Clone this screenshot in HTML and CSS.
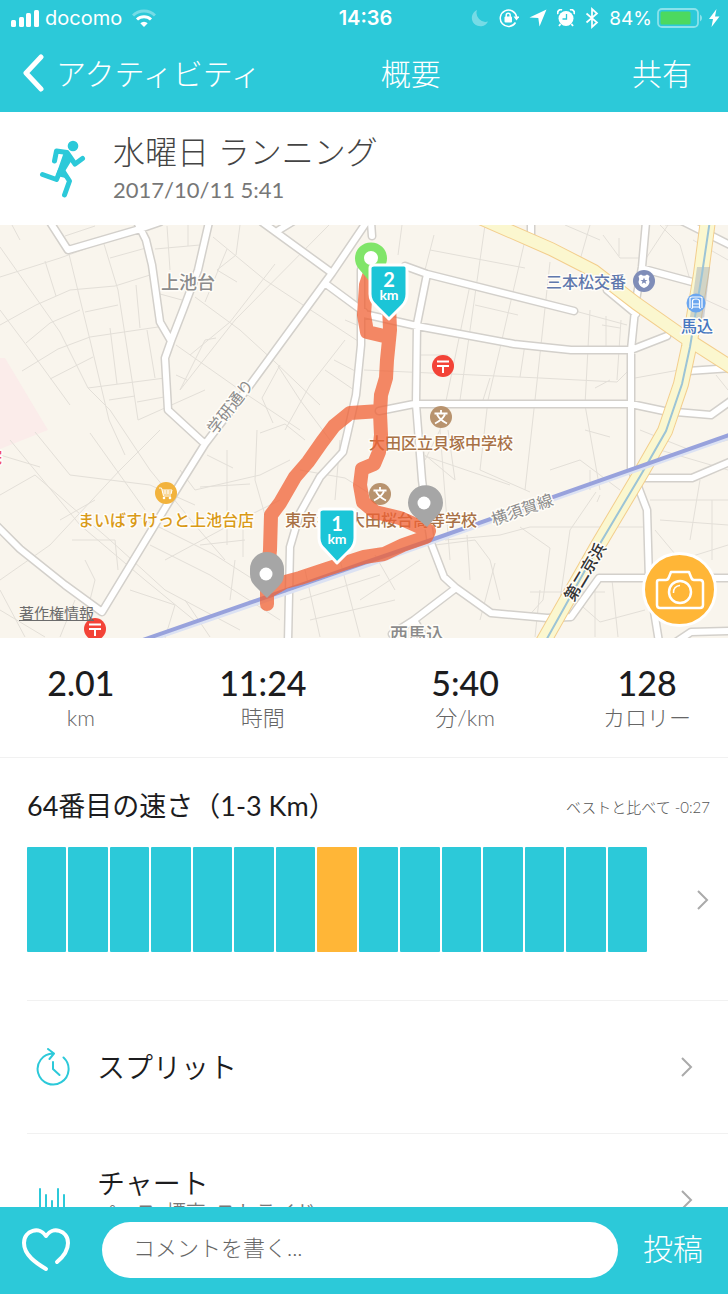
FILE: index.html
```html
<!DOCTYPE html>
<html lang="ja">
<head>
    <meta charset="UTF-8">
    <meta name="viewport" content="width=device-width, initial-scale=1">
    <title>概要</title>
    <link rel="stylesheet" href="styles.css">
</head>
<body>
    <header class="top">
        <div class="status-bar">
            <div class="status-left">
                <svg width="29" height="18" viewBox="0 0 29 18" fill="#fff">
                    <rect x="0" y="11" width="5" height="7" rx="1.5"/>
                    <rect x="8" y="8" width="5" height="10" rx="1.5"/>
                    <rect x="15" y="4" width="5" height="14" rx="1.5"/>
                    <rect x="23" y="1" width="5" height="17" rx="1.5"/>
                </svg>
                <span class="carrier">docomo</span>
                <svg width="24" height="18" viewBox="0 0 24 18" fill="none" stroke="#fff" stroke-width="3">
                    <path d="M1 6.500A15.500 15.500 0 0 1 23 6.500" opacity=".35"/>
                    <path d="M5 10.500A10 10 0 0 1 19 10.500"/>
                    <path d="M12 18L8.300 14.200A5.200 5.200 0 0 1 15.700 14.200Z" fill="#fff" stroke="none"/>
                </svg>
            </div>
            <div class="clock">14:36</div>
            <div class="status-right">
                <svg width="18" height="18" viewBox="0 0 18 18" fill="#fff" opacity=".35">
                    <path d="M6 1A8.500 8.500 0 1 0 17 12.500A9 9 0 0 1 6 1Z"/>
                </svg>
                <svg width="20" height="20" viewBox="0 0 20 20" fill="none" stroke="#fff" stroke-width="1.500">
                    <path d="M16.500 14.500A8.200 8.200 0 1 1 17.600 9"/>
                    <path d="M14.500 8.500H20.500L17.500 12.500Z" fill="#fff" stroke="none"/>
                    <rect x="5.500" y="8.500" width="7.500" height="6" rx="1" fill="#fff" stroke="none"/>
                    <path d="M7.200 9V7.200a2 2 0 0 1 4 0V9"/>
                </svg>
                <svg width="18" height="18" viewBox="0 0 18 18" fill="#fff">
                    <path d="M17.500 .5L10.500 17.500L9.300 9L.5 8.500Z"/>
                </svg>
                <svg width="18" height="18" viewBox="0 0 18 18">
                    <circle cx="9" cy="9.500" r="7.500" fill="#fff"/>
                    <path d="M1 5A3 3 0 0 1 5 1M13 1A3 3 0 0 1 17 5M3.500 15l-1.500 2M14.500 15l1.500 2" fill="none" stroke="#fff" stroke-width="1.800"/>
                    <path d="M9.500 5V10H5.500" fill="none" stroke="#2cc9d9" stroke-width="1.300"/>
                </svg>
                <svg width="14" height="22" viewBox="0 0 14 22" fill="none" stroke="#fff" stroke-width="1.700">
                    <path d="M1.500 6.500L12 15.500L7 20V2L12 6.500L1.500 15.500"/>
                </svg>
                <span class="battery-level">84%</span>
                <svg width="46" height="20" viewBox="0 0 46 20">
                    <rect x="1" y="1" width="40" height="18" rx="4" fill="none" stroke="#8be2eb" stroke-width="1.800"/>
                    <rect x="3.500" y="3.500" width="30" height="13" rx="1.500" fill="#4cd95f"/>
                    <path d="M43 6.500A4 4 0 0 1 43 13.500Z" fill="#8be2eb"/>
                </svg>
                <svg width="12" height="20" viewBox="0 0 12 20" fill="#fff">
                    <path d="M8.500 1L1 11H5L3.500 19L11.500 8.500H7Z"/>
                </svg>
            </div>
        </div>
        <nav class="nav-bar">
            <a class="back" href="#">
                <svg width="22" height="38" viewBox="0 0 22 38" fill="none" stroke="#fff" stroke-width="5" stroke-linecap="round" stroke-linejoin="round">
                    <path d="M19 3L4 19L19 35"/>
                </svg>
                アクティビティ
            </a>
            <h1>概要</h1>
            <button type="button" class="text-btn">共有</button>
        </nav>
    </header>

    <main>
        <section class="activity">
            <svg class="runner" width="48" height="60" viewBox="0 0 48 60" fill="none" stroke="#2cc9d9" stroke-width="5" stroke-linecap="round" stroke-linejoin="round">
                <circle cx="34" cy="8" r="5.300" fill="#2cc9d9" stroke="none"/>
                <path d="M15.500 23L17.500 13L28 14.500L36 26L43.500 20.500"/>
                <path d="M26 14L33 20L25 33L27 39L18 37Z" fill="#2cc9d9" stroke-width="2"/>
                <path d="M21.500 32L17.500 41.500L3.500 36.500M24 33L30.500 43L25.500 57"/>
            </svg>
            <div>
                <h2>水曜日 ランニング</h2>
                <time datetime="2017-10-11T05:41">2017/10/11 5:41</time>
            </div>
        </section>

        <section class="map">
            <svg class="map-canvas" viewBox="0 225 728 413" preserveAspectRatio="xMidYMid slice">
                <rect x="0" y="225" width="728" height="413" fill="#f9f5ed"/>
                <path d="M0 358H5L48 430L0 449Z" fill="#fbecea"/>

                <!-- side streets -->
                <g fill="none" stroke="#e3dfd8" stroke-width="1">
                    <path d="M0 247L60 332L88 388L110 410L150 470L195 525L225 560M0 310L30 350L70 405M12 225L20 240M0 277L60 258L110 240M0 325L36 305L70 290L115 286L150 275M26 343L50 323L80 310M22 371L58 349L90 337L158 327M50 379L93 357M88 388L165 378M68 250L90 340L109 420L125 455M104 244L118 290L132 380L138 420L205 390M45 261L56 296M110 328L117 384M147 330L155 378M136 285L140 328M85 312L118 305M109 400L135 396M137 402L164 397M65 236L95 226M110 258L146 248M167 226L170 270M155 249L200 245M188 225V246M160 294L182 300M176 345L240 390L300 430M195 297L240 330L275 362L320 405M213 237L265 280L364 345M240 225L236 255L217 270L237 282M227 249L205 302M275 264L230 322L190 355M329 225L235 320L180 390L205 340L216 338M176 375L187 380"/>
                    <path d="M280 365L262 398L273 423M278 366L300 400L330 440M345 340L310 385L285 430M334 360L357 372M345 320L364 328M325 370L354 390M260 433L285 424L305 440"/>
                    <path d="M402 225L398 255M434 235L425 270L530 300M485 225L460 400M525 240L488 400L480 470M590 225L580 260M430 250L525 268M470 285L440 430L425 460M550 262L535 400L525 490M590 310L585 405L600 490M606 316V350M621 320L617 380M420 355H448M364 370L540 378L617 382L629 370M475 305L518 315M525 344L520 377M635 378L690 368M490 378L483 400M603 235L620 258H640M619 238V256M660 225L680 245L690 280M640 430L690 450L728 440M565 225L600 240M668 225L645 260M693 240L728 260M706 300L728 310M716 375L728 390M575 311L627 325M602 325L620 328M610 380L595 388M665 225L700 225"/>
                    <path d="M0 495L35 475L110 540L165 590L240 630M0 580L50 545L120 470L160 430M10 440L80 525L145 580L200 625M35 432L70 475L150 485L195 505M90 433L120 475L145 510M0 455L40 467M60 520L95 500M72 540H115L118 570M85 560L95 580L90 600M135 515L215 555L270 590M150 545L210 575L280 620M180 470L195 490L260 475L290 460M200 487L250 484M165 560L230 525L280 500M130 590L175 605L165 638M60 637L75 600M25 637L0 590M227 450V545M243 525V557M200 545L245 540M207 455L233 468M257 430L255 480L265 515M0 610L45 637M185 600L210 637M235 560L230 600"/>
                    <path d="M300 470L345 478L380 500M340 440L335 500M440 430L450 560M448 430L455 480L425 455M480 470L530 492M425 456L510 485M550 470L580 460L620 490M596 492L570 530L560 600M445 540L500 535L530 527H645M520 527L550 548L543 600L525 620M435 545L475 540L490 560L500 600M495 563L480 620M530 592L605 592M467 535L470 580M540 590L535 637M585 430L610 437M590 470V490M650 500H728M655 530L680 560L728 545M700 480L690 540M712 500V560M595 590V637M612 580L618 637M575 600L600 622L645 610M660 450L728 470M600 495L597 502M305 570L320 637M340 560L360 637M300 600L380 575M360 600L420 560M375 555L395 590M660 520L728 525M310 620L395 600"/>
                </g>

                <!-- main streets: grey casing, then white fill -->
                <g class="casing">
                    <path id="streets" d="M50 222L68 250L140 229L160 222M137 222L146 240L152 265L160 322L171 341M209 222L198 270L183 310L171 341L165 358L168 410L205 444M372 214L332 273L250 385L205 444L170 500L102 612L65 585L20 549L-4 525M262 222L332 273M326 284L364 312M292 222L279 230M371 222L372 236M361 270V345L356 395L347 435L343 452L320 477L300 513L290 547L288 642M405 266L427 274L574 311M427 274L417 324L416 404L422 480L426 510L431 543L444 577L456 588L491 613L547 618L571 617L599 578H732M456 588L414 620L392 634M414 620L427 642M364 314L417 326L514 344L571 350H631L667 336M379 411L414 404H631L664 411L711 415L732 400M646 222L642 267L636 300L631 350V468L647 510L649 580L659 642M607 290L636 314M644 269L696 283M682 221L704 232M712 236L732 246M688 371L732 368M531 222V236M645 478H692L732 461M676 642L691 632L732 631"/>
                </g>
                <use href="#streets" class="street"/>

                <!-- highways -->
                <g fill="none">
                    <path d="M480 218L551 249L594 271L637 304L684 337L734 369" stroke="#f3ce8d" stroke-width="14"/>
                    <path d="M708 220L701 274L689 347L681 384L665 431L641 473L597 547L542 644" stroke="#f3ce8d" stroke-width="16"/>
                    <path d="M480 218L551 249L594 271L637 304L684 337L734 369" stroke="#fbf7cf" stroke-width="12"/>
                    <path d="M708 220L701 274L689 347L681 384L665 431L641 473L597 547L542 644" stroke="#fbf7cf" stroke-width="14"/>
                    <path d="M697 267H710L704 319L690 317Z" fill="#9da9bb" opacity=".45"/>
                    <path d="M710 220L702 274L690 347L682 384L666 431L642 473L598 547L544 644" stroke="#9cc4d6" stroke-width="2"/>
                    <path d="M140 644L364 567L431 543L732 437" stroke="#dce2f3" stroke-width="3"/>
                    <path d="M140 641L364 563L431 540L732 434" stroke="#98a2dc" stroke-width="4"/>
                </g>

                <!-- place names -->
                <g class="place">
                    <text x="188" y="289" class="area">上池台</text>
                    <text x="417" y="641" class="area">西馬込</text>
                    <text x="586" y="288" class="police">三本松交番</text>
                    <text x="697" y="332" class="station">馬込</text>
                    <text x="441" y="449" class="school">大田区立貝塚中学校</text>
                    <text x="381" y="526" class="school">東京都立大田桜台高等学校</text>
                    <text x="166" y="526" class="shop">まいばすけっと上池台店</text>
                    <text x="-6" y="463" class="hospital">院</text>
                    <text class="road-name" transform="translate(235 410) rotate(-52)">学研通り</text>
                    <text class="road-name" transform="translate(524 515) rotate(-19)">横須賀線</text>
                    <text class="highway-name" transform="translate(590 575) rotate(-59)">第二京浜</text>
                </g>

                <!-- place icons -->
                <g transform="translate(644 281)">
                    <circle r="11" fill="#7f8db8"/>
                    <path d="M-5.500-5L-3-6.500Q0-4 3-6.500L5.500-5Q4-2 5.500 1Q5 5.500 0 7Q-5 5.500-5.500 1Q-4-2-5.500-5Z" fill="#fff"/>
                    <path d="M0-3.500L1-1H3.500L1.500 .5L2.300 3L0 1.500L-2.300 3L-1.500 .5L-3.500-1H-1Z" fill="#7f8db8"/>
                </g>
                <g transform="translate(696 303)">
                    <circle r="9.500" fill="#6ba6ef"/>
                    <path d="M-6 5V-5Q-6-6-4-6H4Q6-6 6-5V5M-3.500 4V-2Q-3.500-4 0-4Q3.500-4 3.500-2V4ZM-3 1H3M-3 4L-4.500 6M3 4L4.500 6" fill="none" stroke="#fff" stroke-width="1.200"/>
                </g>
                <g id="post">
                    <circle cx="443" cy="366" r="11" fill="#f34337"/>
                    <path d="M437 361.500H449M437 366H449M443 366V373" fill="none" stroke="#fff" stroke-width="2"/>
                </g>
                <use href="#post" x="-348" y="263"/>
                <g id="school">
                    <circle cx="441" cy="417" r="11" fill="#b8936e"/>
                    <path d="M441 410V413M434.500 413.500H447.500M437 414.500Q440 420 447 423.500M445 414.500Q442 420 435 423.500" fill="none" stroke="#fff" stroke-width="1.800"/>
                </g>
                <use href="#school" x="-61" y="77"/>
                <g transform="translate(166 493)">
                    <circle r="11" fill="#f2b33d"/>
                    <path d="M-7-5H-4.500L-2.500 3H5M-4-3H6L5 1H-3M-1-3V1M2-3V1M-4-1H6" fill="none" stroke="#fff" stroke-width="1"/>
                    <circle cx="-2" cy="5" r="1.300" fill="#fff"/>
                    <circle cx="4" cy="5" r="1.300" fill="#fff"/>
                </g>

                <!-- run track -->
                <path class="track" d="M371 270L366 285L364 315L367 332L384 336M389 305L390 330L387 360L386 378L381 395L380 413L381 435L379 452L374 464L362 469L360 485L363 502L375 512L400 518L429 531L426 537L403 545L384 554L364 557L327 569L300 578L285 582L267 592V604V578L270 550L271 515L280 503L295 477L308 462L322 442L334 426L350 413L365 412L380 411"/>

                <!-- start, pauses and kilometre marks -->
                <path d="M371 283L359 269A16 16 0 1 1 383 269Z" fill="#80e569"/>
                <circle cx="371" cy="258" r="7" fill="#fff"/>
                <path d="M267 598Q260 591 255 586A17 17 0 0 1 250 574V569A16.500 16.500 0 0 1 284 569V574A17 17 0 0 1 279 586Q274 591 267 598Z" fill="#a6a6a6"/>
                <circle cx="266" cy="574" r="6.500" fill="#fff"/>
                <path d="M427 527L413 515A17.500 17.500 0 1 1 438 515Z" fill="#a6a6a6"/>
                <circle cx="424" cy="503" r="6.500" fill="#fff"/>
                <g class="km-mark">
                    <path d="M374 265H404Q407 265 407 268V294Q407 301 402 306L389 319L376 306Q370 301 370 294V268Q370 265 374 265Z"/>
                    <text x="389" y="287" class="km-number">2</text>
                    <text x="389" y="300">km</text>
                </g>
                <g class="km-mark">
                    <path d="M323 509H352Q355 509 355 512V538Q355 545 350 550L337 563L325 550Q319 545 319 538V512Q319 509 323 509Z"/>
                    <text x="337" y="531" class="km-number">1</text>
                    <text x="337" y="544">km</text>
                </g>
            </svg>
            <a class="legal" href="#">著作権情報</a>
            <button type="button" class="camera" aria-label="写真">
                <svg width="50" height="42" viewBox="0 0 50 42" fill="none" stroke="#fff" stroke-width="2.500" stroke-linejoin="round">
                    <path d="M4 11H11Q13 11 14 8L16 3H34L36 8Q37 11 39 11H45Q48 11 48 14V36Q48 39 45 39H5Q2 39 2 36V13Q2 11 4 11Z"/>
                    <circle cx="25" cy="23" r="11"/>
                    <path d="M18.500 24A6.500 6.500 0 0 1 25 16.500" stroke-width="1.500"/>
                </svg>
            </button>
        </section>

        <section class="stats">
            <div class="stat"><strong>2.01</strong><span>km</span></div>
            <div class="stat"><strong>11:24</strong><span>時間</span></div>
            <div class="stat"><strong>5:40</strong><span>分/km</span></div>
            <div class="stat"><strong>128</strong><span>カロリー</span></div>
        </section>

        <section class="ranking">
            <div class="ranking-header">
                <h3>64番目の速さ（1-3 Km）</h3>
                <span>ベストと比べて -0:27</span>
            </div>
            <a class="ranking-body" href="#" aria-label="ランキング">
                <div class="bars">
                    <i></i><i></i><i></i><i></i><i></i><i></i><i></i><i class="current"></i><i></i><i></i><i></i><i></i><i></i><i></i><i></i>
                </div>
                <svg class="chevron" width="14" height="22" viewBox="0 0 14 22">
                    <path d="M2 2L11 11L2 20"/>
                </svg>
            </a>
        </section>

        <div class="menu">
            <a class="menu-item" href="#">
                <svg class="menu-icon" width="36" height="38" viewBox="0 0 36 38">
                    <path d="M28.500 9.500A15.500 15.500 0 1 1 18 5.500M13 1L19 5.500L14.500 11M18 14V21L24.500 27"/>
                </svg>
                <span class="menu-text">スプリット</span>
                <svg class="chevron" width="14" height="22" viewBox="0 0 14 22">
                    <path d="M2 2L11 11L2 20"/>
                </svg>
            </a>
            <a class="menu-item" href="#">
                <svg class="menu-icon" width="36" height="38" viewBox="0 0 36 38">
                    <path d="M5 8V27M11 14V27M17 20V27M23 8V27M29 14V27M3 32H31"/>
                </svg>
                <span class="menu-text">チャート<small>ペース, 標高, ストライド</small></span>
                <svg class="chevron" width="14" height="22" viewBox="0 0 14 22">
                    <path d="M2 2L11 11L2 20"/>
                </svg>
            </a>
        </div>
    </main>

    <form class="comment-bar">
        <button type="button" class="like" aria-label="いいね">
            <svg width="50" height="46" viewBox="0 0 50 46" fill="none" stroke="#fff" stroke-width="4" stroke-linecap="round" stroke-linejoin="round">
                <path d="M25 42C15 36 3 28 3 16C3 3 19 -1 25 9C31 -1 47 3 47 16C47 24 42 30 36 35"/>
            </svg>
        </button>
        <input type="text" name="comment" placeholder="コメントを書く..." aria-label="コメント">
        <button type="submit" class="text-btn">投稿</button>
    </form>
</body>
</html>
```
FILE: styles.css
```css
:root {
    --primary: #2cc9d9;
    --accent: #ffb637;
    --text-primary: #1c1c1e;
    --text-secondary: #777;
    --line: #f1f1f1;
}

* {
    box-sizing: border-box;
}

body {
    margin: 0;
    height: 100vh;
    display: flex;
    flex-direction: column;
    overflow: hidden;
    font-family: Lato, "Noto Sans CJK JP", sans-serif;
    color: var(--text-primary);
    background: white;
}

h1, h2, h3 {
    margin: 0;
    font-weight: 300;
}

a {
    color: inherit;
    text-decoration: none;
}

button {
    padding: 0;
    border: none;
    background: none;
    font-family: inherit;
    color: inherit;
    cursor: pointer;
}

svg {
    display: block;
    flex-shrink: 0;
}

/* Header */
.top {
    flex-shrink: 0;
    background: var(--primary);
    color: white;
}

.status-bar {
    display: grid;
    grid-template-columns: 1fr auto 1fr;
    align-items: center;
    height: 36px;
    padding: 0 8px 0 11px;
    font-family: Inter, sans-serif;
    font-size: 20px;
}

.status-left,
.status-right {
    display: flex;
    align-items: center;
    gap: 5px;
}

.status-left svg:last-child {
    margin-left: 5px;
}

.status-right {
    justify-content: flex-end;
    gap: 10px;
}

.status-right svg:nth-last-child(-n+2) {
    margin-left: -5px;
}

.battery-level {
    font-size: 19px;
}

.clock {
    font-weight: 600;
}

.nav-bar {
    display: grid;
    grid-template-columns: 10fr auto 7fr;
    align-items: center;
    height: 76px;
    padding: 0 36px 3px 22px;
}

.back {
    display: flex;
    align-items: center;
    gap: 12px;
}

.back,
.nav-bar h1,
.text-btn {
    font-size: 30px;
    font-weight: 300;
    line-height: 40px;
}

.nav-bar .text-btn {
    justify-self: end;
}

main {
    flex: 1;
    min-height: 0;
    overflow-y: auto;
    scrollbar-width: none;
}

/* Activity title */
.activity {
    display: flex;
    align-items: center;
    gap: 26px;
    height: 113px;
    padding: 0 39px 2px;
}

.activity h2 {
    font-size: 32px;
    line-height: 44px;
    color: #444;
}

.activity time {
    display: block;
    font-size: 22px;
    line-height: 32px;
    color: var(--text-secondary);
}

/* Map */
.map {
    position: relative;
    height: 413px;
    overflow: hidden;
}

.map-canvas {
    width: 100%;
    height: 100%;
}

.casing {
    fill: none;
    stroke: #d3d0cb;
    stroke-width: 9px;
    stroke-linecap: round;
    stroke-linejoin: round;
}

.street {
    fill: none;
    stroke: white;
    stroke-width: 6px;
    stroke-linecap: round;
    stroke-linejoin: round;
}

.place {
    font-family: "Noto Sans CJK JP", sans-serif;
    font-size: 16px;
    font-weight: 500;
    text-anchor: middle;
    paint-order: stroke;
    stroke: #fffdf8;
    stroke-width: 3px;
    stroke-linejoin: round;
}

.area {
    font-size: 18px;
    fill: #8b8b8b;
}

.police {
    fill: #6078ad;
}

.station {
    fill: #4777c0;
}

.school {
    fill: #a87146;
}

.shop {
    fill: #d99a17;
}

.hospital {
    fill: #ef4a65;
}

.road-name {
    font-weight: 400;
    fill: #8b8b8b;
}

.highway-name {
    fill: #333;
}

.track {
    fill: none;
    stroke: #f06236;
    stroke-width: 14px;
    stroke-linecap: round;
    stroke-linejoin: round;
    opacity: 0.75;
}

.km-mark {
    fill: white;
    font-size: 14px;
    font-weight: 700;
    text-anchor: middle;
}

.km-mark path {
    fill: #1bc5d7;
    stroke: white;
    stroke-width: 3px;
    stroke-linejoin: round;
}

.km-number {
    font-size: 20px;
}

.legal {
    position: absolute;
    left: 19px;
    bottom: 14px;
    font-size: 15px;
    line-height: 22px;
    color: #6b6b6b;
    text-decoration: underline;
}

.camera {
    position: absolute;
    right: 11px;
    bottom: 11px;
    display: grid;
    place-items: center;
    width: 75px;
    height: 75px;
    border: 3px solid white;
    border-radius: 50%;
    background: var(--accent);
}

/* Totals */
.stats {
    display: grid;
    grid-template-columns: 4fr 5fr 5fr 4fr;
    align-items: center;
    height: 120px;
    border-bottom: 1px solid var(--line);
    text-align: center;
}

.stat strong,
.stat span {
    display: block;
}

.stat strong {
    font-size: 34px;
    font-weight: 500;
    line-height: 40px;
}

.stat span {
    font-size: 22px;
    font-weight: 300;
    line-height: 30px;
    color: #666;
}

/* Ranking */
.ranking {
    padding: 28px 18px 48px 27px;
}

.ranking-header {
    display: flex;
    align-items: center;
    justify-content: space-between;
    margin-bottom: 21px;
}

.ranking-header h3 {
    font-size: 27px;
    font-weight: 400;
    line-height: 40px;
}

.ranking-header span {
    font-size: 15px;
    font-weight: 300;
    color: #555;
}

.ranking-body {
    display: flex;
    align-items: center;
    gap: 49px;
}

.bars {
    display: flex;
    flex: 1;
    gap: 2px;
    height: 105px;
}

.bars i {
    flex: 1;
    border-radius: 1px;
    background: var(--primary);
}

.bars .current {
    background: var(--accent);
}

.chevron {
    fill: none;
    stroke: #aaa;
    stroke-width: 2px;
}

/* Menu */
.menu {
    margin-left: 27px;
}

.menu-item {
    display: flex;
    align-items: center;
    height: 133px;
    padding: 0 34px 0 8px;
    border-top: 1px solid var(--line);
}

.menu-icon {
    margin-right: 26px;
    fill: none;
    stroke: var(--primary);
    stroke-width: 2px;
    stroke-linecap: round;
    stroke-linejoin: round;
}

.menu-text {
    flex: 1;
    font-size: 28px;
    font-weight: 350;
    line-height: 34px;
}

.menu-text small {
    display: block;
    margin-bottom: 10px;
    font-size: 20px;
    line-height: 24px;
    color: var(--text-secondary);
}

/* Comment bar */
.comment-bar {
    display: flex;
    align-items: center;
    flex-shrink: 0;
    height: 87px;
    padding: 0 25px 2px 21px;
    background: var(--primary);
    color: white;
}

.comment-bar input {
    flex: 1;
    min-width: 0;
    height: 56px;
    margin: 0 25px 0 31px;
    padding: 0 31px 4px;
    border: none;
    border-radius: 28px;
    background: white;
    font-family: inherit;
    font-size: 22px;
    font-weight: 300;
}

.comment-bar input::placeholder {
    color: #666;
}

.comment-bar .text-btn {
    padding-bottom: 4px;
}
```
